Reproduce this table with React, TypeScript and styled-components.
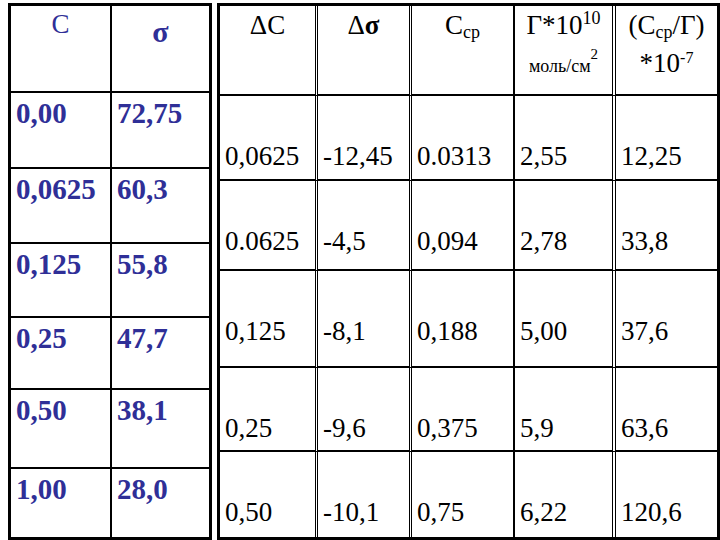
import React from 'react';
import styled, { createGlobalStyle } from 'styled-components';

const GlobalStyle = createGlobalStyle`
  html, body {
    margin: 0;
    padding: 0;
    background: #fff;
    overflow: hidden;
    font-family: "Liberation Serif", "Times New Roman", serif;
  }
`;

const BLUE = '#2f2f97';

const leftRows = [
  ['0,00', '72,75'],
  ['0,0625', '60,3'],
  ['0,125', '55,8'],
  ['0,25', '47,7'],
  ['0,50', '38,1'],
  ['1,00', '28,0'],
];

const rightRows = [
  ['0,0625', '-12,45', '0.0313', '2,55', '12,25'],
  ['0.0625', '-4,5', '0,094', '2,78', '33,8'],
  ['0,125', '-8,1', '0,188', '5,00', '37,6'],
  ['0,25', '-9,6', '0,375', '5,9', '63,6'],
  ['0,50', '-10,1', '0,75', '6,22', '120,6'],
];

// column separators of the right table (the slide mixes double and single rules)
const rightSeps = ['3px double #000', '3px double #000', '2px solid #000', '4px double #000', 'none'];

const Page = styled.div`
  display: flex;
  align-items: flex-start;
  gap: 5px;
  padding: 3px 0 0 8px;
  width: 720px;
  height: 540px;
  box-sizing: border-box;
  font-family: "Liberation Serif", "Times New Roman", serif;
`;

const LeftTable = styled.div`
  display: grid;
  grid-template-columns: 101px 97px;
  grid-template-rows: 87px 76px 75px 74px 72px 79px 68px;
  border: 3px solid #000;
  color: ${BLUE};
`;

const RightTable = styled.div`
  display: grid;
  grid-template-columns: 98px 94px 103px 101px 101px;
  grid-template-rows: 90px 85px 90px 97px 84px 85px;
  border: 3px solid #000;
  color: #000;
`;

const Cell = styled.div<{ $right?: string; $bottom?: boolean }>`
  box-sizing: border-box;
  font-family: "Liberation Serif", "Times New Roman", serif;
  border-right: ${(p) => p.$right || 'none'};
  border-bottom: ${(p) => (p.$bottom ? '2px solid #000' : 'none')};
  white-space: nowrap;
`;

const LeftHead = styled(Cell)<{ $bold?: boolean; $pad: number }>`
  text-align: center;
  font-size: ${(p) => (p.$bold ? 30 : 27)}px;
  font-weight: ${(p) => (p.$bold ? 700 : 400)};
  line-height: 1;
  padding-top: ${(p) => p.$pad}px;
`;

const LeftValue = styled(Cell)`
  font-size: 29px;
  font-weight: 700;
  line-height: 1;
  padding: 6px 0 0 5px;
`;

const RightHead = styled(Cell)`
  text-align: center;
  font-size: 27px;
  line-height: 38px;
`;

const RightValue = styled(Cell)`
  font-size: 27px;
  line-height: 1;
  padding: 47px 0 0 5px;
`;

const Sigma = styled.b`
  font-weight: 700;
`;

const Sub = styled.span`
  font-size: 18px;
  line-height: 0;
  vertical-align: -4px;
`;

const Sup = styled.span<{ $size: number; $lift: number }>`
  font-size: ${(p) => p.$size}px;
  line-height: 0;
  vertical-align: ${(p) => p.$lift}px;
`;

const Unit = styled.span`
  font-size: 18px;
`;

export default function App() {
  const lastLeft = leftRows.length - 1;
  const lastRight = rightRows.length - 1;

  return (
    <>
      <GlobalStyle />
      <Page>
        <LeftTable>
          <LeftHead $right='2px solid #000' $bottom $pad={5}>
            C
          </LeftHead>
          <LeftHead $bottom $bold $pad={11}>
            σ
          </LeftHead>
          {leftRows.map((row, i) => (
            <React.Fragment key={i}>
              <LeftValue $right='2px solid #000' $bottom={i !== lastLeft}>
                {row[0]}
              </LeftValue>
              <LeftValue $bottom={i !== lastLeft}>{row[1]}</LeftValue>
            </React.Fragment>
          ))}
        </LeftTable>

        <RightTable>
          <RightHead $right={rightSeps[0]} $bottom>
            ΔC
          </RightHead>
          <RightHead $right={rightSeps[1]} $bottom>
            Δ<Sigma>σ</Sigma>
          </RightHead>
          <RightHead $right={rightSeps[2]} $bottom>
            C<Sub>ср</Sub>
          </RightHead>
          <RightHead $right={rightSeps[3]} $bottom>
            Γ*10
            <Sup $size={18} $lift={10}>
              10
            </Sup>
            <br />
            <Unit>
              моль/см
              <Sup $size={15} $lift={13}>
                2
              </Sup>
            </Unit>
          </RightHead>
          <RightHead $bottom>
            (C<Sub>ср</Sub>/Г)
            <br />
            *10
            <Sup $size={16} $lift={9}>
              -7
            </Sup>
          </RightHead>
          {rightRows.map((row, i) =>
            row.map((v, j) => (
              <RightValue
                key={`${i}-${j}`}
                $right={rightSeps[j]}
                $bottom={i !== lastRight}
              >
                {v}
              </RightValue>
            ))
          )}
        </RightTable>
      </Page>
    </>
  );
}
